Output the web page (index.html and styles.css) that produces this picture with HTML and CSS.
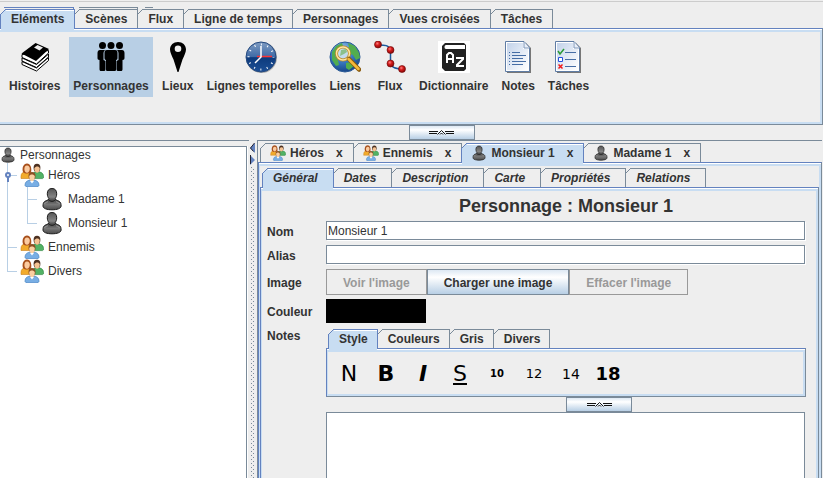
FILE: index.html
```html
<!DOCTYPE html>
<html lang="fr">
  <head>
    <meta charset="utf-8">
    <title>Personnages</title>
    <link rel="stylesheet" href="styles.css">
  </head>
  <body>
    <svg class="defs" aria-hidden="true">
      <defs>
        <linearGradient id="dark" x1="0" y1="0" x2="0" y2="1">
          <stop offset="0" stop-color="#555" />
          <stop offset=".4" stop-color="#858585" />
          <stop offset=".55" stop-color="#4a4a4a" />
          <stop offset=".75" stop-color="#777" />
          <stop offset="1" stop-color="#4c4c4c" />
        </linearGradient>
        <linearGradient id="clockface" x1="0" y1="0" x2="0" y2="1">
          <stop offset="0" stop-color="#7f9cc2" />
          <stop offset=".5" stop-color="#3f6aa6" />
          <stop offset=".52" stop-color="#0d3a7c" />
          <stop offset="1" stop-color="#1c4f96" />
        </linearGradient>
        <radialGradient id="globe" cx=".4" cy=".25" r=".8">
          <stop offset="0" stop-color="#9cc6ee" />
          <stop offset=".5" stop-color="#3b7cc4" />
          <stop offset="1" stop-color="#123f80" />
        </radialGradient>
        <radialGradient id="ball" cx=".4" cy=".35" r=".7">
          <stop offset="0" stop-color="#ff8080" />
          <stop offset=".4" stop-color="#d41c1c" />
          <stop offset="1" stop-color="#7c0505" />
        </radialGradient>
        <linearGradient id="paper" x1="0" y1="0" x2="1" y2="1">
          <stop offset="0" stop-color="#c3d3ea" />
          <stop offset="1" stop-color="#fff" />
        </linearGradient>
      </defs>
      <symbol id="person" viewBox="0 0 24 24">
        <path d="M12 1.500c3.200 0 4.700 2 4.700 5.300 0 2-.6 3.700-1.700 5 1.500 1.800 3 1.700 4.500 2.700 1.300.9 1.600 2.500 1.600 4.500 0 2.500-4 3.800-9.100 3.800S3 21.500 3 19c0-2 .3-3.600 1.600-4.500 1.500-1 3-.9 4.500-2.700-1.100-1.300-1.800-3-1.800-5C7.300 3.500 8.800 1.500 12 1.500z" fill="url(#dark)" stroke="#1c1c1c" />
        <path d="M8.500 12.500c2 2.500 5 2.500 7 0" fill="none" stroke="#1c1c1c" />
        <path d="M4.500 17c.4-1.500 2-1.700 3.500-2.300M19.500 17c-.4-1.500-2-1.700-3.500-2.300" fill="none" stroke="#aaa" stroke-width=".7" />
      </symbol>
      <symbol id="group" viewBox="0 0 24 24">
        <path d="M1 13.500c0-3.300 2-4.700 5.500-4.700s6 1.400 6 4.700l-.5 2H1z" fill="#f2ab2c" stroke="#c9801a" stroke-width=".6" />
        <path d="M3 9C1.600 5 3.500.5 7 .5S12 5 11 9.500C8 11 5 11 3 9z" fill="#a8501c" />
        <path d="M7 2.500c1.800 0 2.800 1.300 2.800 3.300S8.500 9.800 7 9.800 4.400 8 4.400 6 5.200 2.500 7 2.500z" fill="#fbcba0" />
        <path d="M12 13.500c0-3.300 2-4.700 5.500-4.700s6 1.400 6 4.700v1.300l-1 .8H12z" fill="#52b265" stroke="#238038" stroke-width=".6" />
        <ellipse cx="17" cy="5" rx="3.400" ry="4.200" fill="#4c3020" />
        <path d="M14.300 5.200c1-1.200 2-1.800 3-1.700 1.200 0 2 .7 2.500 1.700 0 2.500-1 4.500-2.700 4.500s-2.800-2-2.800-4.500z" fill="#f5c393" />
        <path d="M5 22.500c0-4 2.500-5.500 7-5.500s7 1.500 7 5.500l-1 1.200H6z" fill="#78aee4" stroke="#3b79bb" stroke-width=".6" />
        <ellipse cx="12" cy="13" rx="3.500" ry="4" fill="#8a5024" />
        <path d="M9.200 13c1-1.200 1.600-1.600 2.800-1.600s2.200.6 2.800 1.600c0 3-1 5.500-2.800 5.500S9.200 16 9.200 13z" fill="#fbd0a2" />
        <path d="M10 18l2 2.500 2-2.500" fill="#fff" />
      </symbol>
      <symbol id="grip" viewBox="0 0 25 5">
        <path d="M0 1.500h9M0 3.500h8M16 1.500h9M17 3.500h8" fill="none" stroke="#111" />
        <path d="M8.500 4.500l4-4 4 4M11 4.500l1.500-1.500 1.500 1.500" fill="none" stroke="#111" />
      </symbol>
    </svg>

    <div class="app">
      <header class="ribbon">
        <div class="stack"><span class="on"></span><span></span><span class="short"></span></div>
        <div class="tabs" role="tablist">
          <button class="tab selected" role="tab">Eléments</button>
          <button class="tab" role="tab">Scènes</button>
          <button class="tab" role="tab">Flux</button>
          <button class="tab" role="tab">Ligne de temps</button>
          <button class="tab" role="tab">Personnages</button>
          <button class="tab" role="tab">Vues croisées</button>
          <button class="tab" role="tab">Tâches</button>
        </div>
        <div class="panel tools">
          <button class="tool">
            <svg width="32" height="32" viewBox="0 0 32 32">
              <path d="M3 13.500v3L17.500 23 29.500 12V9.500z" fill="#fff" stroke="#000" />
              <path d="M3 17l0 3L17.500 26.500 29.500 16v-3L17.500 23.500z" fill="#fff" stroke="#000" />
              <path d="M3 20.500v3L17.500 30 29.500 19.500v-3L17.500 27z" fill="#fff" stroke="#000" />
              <path d="M2.500 12.500L16.500 2l13.500 6-13 12z" />
              <path d="M15 6.500l3.500-2.500 5.500 2.500-3.500 3z" fill="#eee" />
            </svg>
            Histoires
          </button>
          <button class="tool active">
            <svg width="32" height="32" viewBox="0 0 32 32">
              <circle cx="7.500" cy="4.500" r="3.500" /><circle cx="16" cy="4.500" r="3.500" /><circle cx="24.500" cy="4.500" r="3.500" />
              <path d="M5 9h5c-1 1-1.500 2-1.500 3v7l2 1v8c0 2-1 2-2 2H6c-1 0-1.500-.5-1.500-2v-9C3 19 2.500 18 2.500 17v-5c0-2 1-3 2.500-3zM27 9h-5c1 1 1.500 2 1.500 3v7l-2 1v8c0 2 1 2 2 2H26c1 0 1.500-.5 1.500-2v-9c1.500 0 2-1 2-2v-5c0-2-1-3-2.500-3z" />
              <path d="M12 9h8c2 0 2.500 1 2.500 3v5c0 1-.5 2-1.500 2v9.500c0 1-.5 1.500-1.500 1.500h-7c-1 0-1.500-.5-1.500-1.500V19c-1 0-1.500-1-1.500-2v-5c0-2 .5-3 2.500-3z" />
            </svg>
            Personnages
          </button>
          <button class="tool">
            <svg width="32" height="32" viewBox="0 0 32 32">
              <path fill-rule="evenodd" d="M16 1c4.500 0 8 3 8 7.500 0 3-2 6.500-3.500 10L16.500 31h-1l-4-12.500C10 15 8 11.500 8 8.500 8 4 11.500 1 16 1zm0 3.500a3.300 3.300 0 1 0 0 6.600 3.300 3.300 0 0 0 0-6.600z" />
            </svg>
            Lieux
          </button>
          <button class="tool">
            <svg width="32" height="32" viewBox="0 0 32 32">
              <circle cx="16.500" cy="16.500" r="15.500" fill="#aaa" />
              <circle cx="16" cy="16" r="15" fill="url(#clockface)" stroke="#254a80" />
              <circle cx="16" cy="16" r="12.500" fill="none" stroke="#fff" stroke-width="2" stroke-dasharray="1 5.545" stroke-dashoffset=".5" />
              <path d="M12 15.500h15" stroke="#f33" stroke-width="1.500" />
              <path d="M16 5v11l-6 6" fill="none" stroke="#fff" stroke-width="1.500" />
            </svg>
            Lignes temporelles
          </button>
          <button class="tool">
            <svg width="32" height="32" viewBox="0 0 32 32">
              <circle cx="16" cy="16" r="15" fill="url(#globe)" stroke="#2a5a96" />
              <path d="M3 11l4-6 6-3 1 3-3 3-2 4-3 3 3 4 1 5-3 1-4-6zM19 2l7 3 4 7 1 5-4 2-3-5-5-2-2-4 3-2zM17 22l5-1 3 4-5 4-3-2z" fill="#52ad4e" />
              <circle cx="14" cy="12.500" r="6.500" fill="#d3e6f2" fill-opacity=".85" stroke="#b98726" stroke-width="3" />
              <circle cx="14" cy="12.500" r="6.500" fill="none" stroke="#ffe5a0" stroke-width="1.500" />
              <path d="M11 15l1-6 5-1 1 3-3 2z" fill="#8bc08b" />
              <path d="M20 18l10 10.500" stroke="#8a5b0e" stroke-width="4.500" stroke-linecap="round" />
              <path d="M19.500 18l10 10" stroke="#f6b93b" stroke-width="2.500" stroke-linecap="round" />
            </svg>
            Liens
          </button>
          <button class="tool">
            <svg width="32" height="32" viewBox="0 0 32 32">
              <path d="M4 4c7 0 11 0 12.500 5v12c0 5 4 7 12 7" fill="none" stroke="#1d5a9c" stroke-width="1.500" />
              <g fill="url(#ball)" stroke="#6f0505" stroke-width=".6">
                <circle cx="4" cy="3.500" r="3.500" /><circle cx="16.500" cy="9" r="3.500" /><circle cx="16.500" cy="22.500" r="3.500" /><circle cx="28" cy="28" r="3.500" />
              </g>
            </svg>
            Flux
          </button>
          <button class="tool">
            <svg width="32" height="32" viewBox="0 0 32 32">
              <path fill="#fff" d="M0 0h32v32H0z" />
              <path fill="#222" d="M7 2h19l2 2v24l-2 2H7l-3-3V5z" />
              <path d="M8 4h19v4H8c-2 0-2-4 0-4z" fill="#fff" />
              <path d="M9 22v-8l2-2h2l2 2v8M9 18h6M18 17h7v1l-6 6v1h7" fill="none" stroke="#fff" stroke-width="2" />
            </svg>
            Dictionnaire
          </button>
          <button class="tool">
            <svg width="32" height="32" viewBox="0 0 32 32">
              <path d="M5 2h19l5 5v25H5z" fill="#777" />
              <path d="M3.500.5H22l5.500 6v24h-24z" fill="#fff" stroke="#5f7ca4" />
              <path d="M5 2h16v6h5v21H5z" fill="url(#paper)" />
              <path d="M22 1v6h5.500" fill="#e9eff8" stroke="#7e97b9" />
              <path d="M10 11.500h8M10 14.500h14M10 17.500h11M10 20.500h14M10 23.500h11M7 11.500h1M7 14.500h1M7 17.500h1M7 20.500h1M7 23.500h1" stroke="#456da5" />
            </svg>
            Notes
          </button>
          <button class="tool">
            <svg width="32" height="32" viewBox="0 0 32 32">
              <path d="M5 2h19l5 5v25H5z" fill="#777" />
              <path d="M3.500.5H22l5.500 6v24h-24z" fill="#fff" stroke="#5f7ca4" />
              <path d="M5 2h16v6h5v21H5z" fill="url(#paper)" />
              <path d="M22 1v6h5.500" fill="#e9eff8" stroke="#7e97b9" />
              <path d="M13 11.500h11M13 18.500h11M13 25.500h11" stroke="#456da5" />
              <path d="M6 10l2 3 4-5" fill="none" stroke="#2a9a35" stroke-width="1.500" />
              <path d="M6.500 16.500h4v4h-4z" fill="#fff" stroke="#2250dd" />
              <path d="M6.500 23.500l4 4m0-4l-4 4" stroke="#f01818" stroke-width="1.500" />
            </svg>
            Tâches
          </button>
        </div>
      </header>
      <button class="fold" aria-label="Replier la barre"><svg width="25" height="5"><use href="#grip" /></svg></button>

      <main class="split">
        <aside class="side">
          <div class="tree">
            <div class="node root"><svg width="16" height="16"><use href="#person" /></svg>Personnages</div>
            <ul>
              <li>
                <svg class="handle" width="6" height="10" viewBox="0 0 6 10"><circle cx="3" cy="3" r="2" fill="#fff" stroke="#6382bf" stroke-width="2" /><path d="M3 5v5" stroke="#6382bf" stroke-width="2" /></svg>
                <div class="node"><svg width="24" height="24"><use href="#group" /></svg>Héros</div>
                <ul>
                  <li><div class="node"><svg width="24" height="24"><use href="#person" /></svg>Madame 1</div></li>
                  <li><div class="node"><svg width="24" height="24"><use href="#person" /></svg>Monsieur 1</div></li>
                </ul>
              </li>
              <li><div class="node"><svg width="24" height="24"><use href="#group" /></svg>Ennemis</div></li>
              <li><div class="node"><svg width="24" height="24"><use href="#group" /></svg>Divers</div></li>
            </ul>
          </div>
        </aside>

        <div class="divider">
          <svg width="5" height="22" viewBox="0 0 5 22">
            <path d="M5 0v10L0 5z" fill="#6382bf" /><path d="M4.500 0L.5 5l3 3.500" fill="none" stroke="#223" />
            <path d="M0 12v10l5-5z" fill="#6382bf" /><path d="M.5 12v9" stroke="#223" />
          </svg>
        </div>

        <section class="work">
          <div class="tabs docs" role="tablist">
            <button class="tab" role="tab"><svg width="16" height="16"><use href="#group" /></svg>Héros<span class="close">x</span></button>
            <button class="tab" role="tab"><svg width="16" height="16"><use href="#group" /></svg>Ennemis<span class="close">x</span></button>
            <button class="tab selected" role="tab"><svg width="16" height="16"><use href="#person" /></svg>Monsieur 1<span class="close">x</span></button>
            <button class="tab" role="tab"><svg width="16" height="16"><use href="#person" /></svg>Madame 1<span class="close">x</span></button>
          </div>
          <div class="panel outer">
            <div class="tabs pages" role="tablist">
              <button class="tab selected" role="tab">Général</button>
              <button class="tab" role="tab">Dates</button>
              <button class="tab" role="tab">Description</button>
              <button class="tab" role="tab">Carte</button>
              <button class="tab" role="tab">Propriétés</button>
              <button class="tab" role="tab">Relations</button>
            </div>
            <div class="panel inner">
              <form class="form">
                <h1>Personnage : Monsieur 1</h1>
                <label for="nom">Nom</label>
                <input id="nom" type="text" value="Monsieur 1">
                <label for="alias">Alias</label>
                <input id="alias" type="text">
                <span class="label">Image</span>
                <div class="buttons">
                  <button type="button" disabled>Voir l'image</button>
                  <button type="button">Charger une image</button>
                  <button type="button" disabled>Effacer l'image</button>
                </div>
                <span class="label">Couleur</span>
                <button type="button" class="swatch" aria-label="Couleur"></button>
                <label class="top" for="notes">Notes</label>
                <div class="editor">
                  <div class="tabs" role="tablist">
                    <button type="button" class="tab selected" role="tab">Style</button>
                    <button type="button" class="tab" role="tab">Couleurs</button>
                    <button type="button" class="tab" role="tab">Gris</button>
                    <button type="button" class="tab" role="tab">Divers</button>
                  </div>
                  <div class="panel styles">
                    <button type="button">N</button>
                    <button type="button" class="bold">B</button>
                    <button type="button" class="bold italic">I</button>
                    <button type="button" class="underline">S</button>
                    <button type="button" class="bold s10">10</button>
                    <button type="button" class="s12">12</button>
                    <button type="button" class="s14">14</button>
                    <button type="button" class="bold s18">18</button>
                  </div>
                  <button type="button" class="fold" aria-label="Replier les styles"><svg width="25" height="5"><use href="#grip" /></svg></button>
                  <textarea id="notes"></textarea>
                </div>
              </form>
            </div>
          </div>
        </section>
      </main>
    </div>
  </body>
</html>
```
FILE: styles.css
```css
* {
  box-sizing: border-box;
}

body {
  --line: #7a8a99;
  --blue: #6382bf;
  --light: #c8ddf2;
  --bg: #eee;
  margin: 0;
  background: var(--bg);
  color: #333;
  font: 12px/16px "Liberation Sans", Arial, sans-serif;
}

button {
  margin: 0;
  padding: 0;
  border: 0;
  background: none;
  color: inherit;
  font: inherit;
  font-weight: bold;
  white-space: nowrap;
}

svg {
  display: block;
  flex: none;
}

.defs {
  position: absolute;
  width: 0;
  height: 0;
}

.app {
  display: flex;
  flex-direction: column;
  height: 100vh;
  overflow: hidden;
}

/* tabs */

.tabs {
  display: flex;
  height: 19px;
}

.tab {
  --edge: var(--line);
  --fill: var(--bg);
  position: relative;
  display: flex;
  align-items: center;
  height: 19px;
  margin-right: -1px;
  padding: 1px 11px 0;
  background:
    linear-gradient(to bottom right, transparent 43%, var(--edge) 43%, var(--edge) 57%, var(--fill) 57%) 0 0 / 6px 6px no-repeat,
    linear-gradient(var(--edge), var(--edge)) 6px 0 / 100% 1px no-repeat,
    linear-gradient(var(--edge), var(--edge)) 0 6px / 1px 100% no-repeat,
    linear-gradient(var(--edge), var(--edge)) 100% 0 / 1px 100% no-repeat,
    linear-gradient(var(--fill), var(--fill)) 6px 0 / 100% 100% no-repeat,
    linear-gradient(var(--fill), var(--fill)) 0 6px / 100% 100% no-repeat;
}

.tab.selected {
  --edge: var(--blue);
  --fill: var(--light);
  z-index: 1;
}

.tab.selected::before {
  content: "";
  position: absolute;
  top: 1px;
  left: 6px;
  right: 1px;
  height: 1px;
  background: #fff;
}

.tab.selected::after {
  content: "";
  position: absolute;
  left: 1px;
  right: 1px;
  bottom: -2px;
  height: 2px;
  background: var(--light);
}

.panel {
  border: 1px solid var(--line);
  border-top-color: var(--blue);
  border-left-color: var(--blue);
  box-shadow: inset 0 1px #fff, inset 0 3px var(--light), inset 1px 0 var(--light), inset -2px -2px var(--light);
}

/* top ribbon */

.ribbon {
  padding-top: 7px;
  background: linear-gradient(#ccc, #ccc) 0 1px / 100% 1px no-repeat;
}

.stack {
  display: flex;
  gap: 5px;
  height: 2px;
  padding-left: 4px;
}

.stack span {
  width: 59px;
  border: solid var(--line);
  border-width: 1px 1px 0 0;
}

.stack .on {
  width: 70px;
  border-color: var(--blue);
}

.stack .short {
  width: 8px;
  margin-left: 2px;
  border-right: 0;
}

.tools {
  display: flex;
  align-items: flex-start;
  gap: 5px;
  height: 97px;
  padding: 8px 5px 0;
  border-left: 0;
  box-shadow: inset 0 1px #fff, inset 0 3px var(--light), inset -2px -2px var(--light);
}

.tool {
  display: flex;
  flex-direction: column;
  align-items: center;
  gap: 5px;
  padding: 4px 4px 3px;
}

.active {
  background: #b8cfe5;
}

.fold {
  display: flex;
  flex: none;
  align-items: center;
  justify-content: center;
  width: 66px;
  height: 15px;
  margin-left: calc(50% - 3px);
  border: 1px solid var(--line);
  background: linear-gradient(#dde8f3, #fff 30%, #b8cfe5);
}

/* split area */

.split {
  display: flex;
  flex: 1;
  min-height: 0;
}

.side {
  display: flex;
  flex: none;
  width: 249px;
  padding-top: 5px;
  padding-right: 2px;
  border-top: 1px solid var(--line);
}

.tree {
  flex: 1;
  border: solid var(--line);
  border-width: 1px 1px 0 0;
  background: #fff;
  box-shadow: 1px 0 #fff;
}

.tree ul {
  margin: 0;
  padding: 0;
  list-style: none;
}

.tree > ul {
  padding-left: 7px;
}

.tree li {
  position: relative;
  padding-left: 13px;
}

.tree li ul {
  padding-left: 7px;
}

.tree li::before {
  content: "";
  position: absolute;
  top: 0;
  bottom: 0;
  left: 0;
  border-left: 1px solid #b8cfe5;
}

.tree li:last-child::before {
  bottom: 12px;
}

.tree li::after {
  content: "";
  position: absolute;
  top: 12px;
  left: 0;
  width: 10px;
  border-top: 1px solid #b8cfe5;
}

.node {
  display: flex;
  align-items: center;
  gap: 4px;
  height: 24px;
  line-height: 18px;
}

.root {
  height: 16px;
}

.handle {
  position: absolute;
  z-index: 1;
  top: 9px;
  left: -2px;
}

.divider {
  display: flex;
  flex: none;
  flex-direction: column;
  width: 8px;
  padding: 3px 0 0 1px;
}

.divider::after {
  content: "";
  flex: 1;
  width: 4px;
  margin: 2px 0 0 1px;
  background:
    conic-gradient(from 270deg at 1px 1px, var(--line) 90deg, transparent 0) 0 0 / 4px 4px,
    conic-gradient(from 270deg at 1px 1px, var(--line) 90deg, transparent 0) 2px 2px / 4px 4px;
}

.work {
  display: flex;
  flex: 1;
  flex-direction: column;
  min-width: 0;
  margin-right: 1px;
  padding-top: 2px;
  border: solid var(--line);
  border-width: 1px 0 0 1px;
}

.docs,
.pages {
  flex: none;
  margin-left: 2px;
}

.docs .tab {
  gap: 4px;
  padding-left: 10px;
}

.close {
  margin-left: 8px;
}

.outer,
.inner {
  display: flex;
  flex: 1;
  flex-direction: column;
  min-height: 0;
  border-bottom: 0;
  box-shadow: inset 0 1px #fff, inset 0 3px var(--light), inset 1px 0 var(--light), inset -2px 0 var(--light);
}

.outer {
  padding: 5px 2px 0 1px;
}

.pages {
  margin-left: 2px;
}

.pages .tab {
  padding: 1px 16px 0 11px;
  font-style: italic;
}

.inner {
  padding: 7px 12px 0 6px;
}

.form {
  display: grid;
  flex: 1;
  grid-template-columns: 55px 1fr;
  grid-template-rows: 22px 20px 20px 26px 24px 1fr;
  gap: 4px;
  min-height: 0;
}

h1 {
  grid-column: 2;
  margin: 0;
  font-size: 18px;
  line-height: 22px;
  text-align: center;
}

.form label,
.label {
  align-self: center;
  padding-top: 2px;
  font-weight: bold;
}

.form .top {
  align-self: start;
  padding-top: 1px;
}

.form input {
  width: calc(100% - 1px);
  height: 19px;
  padding: 1px 1px 0;
  border: 1px solid var(--line);
  background: #fff;
  box-shadow: 1px 1px #fff;
  color: inherit;
  font: inherit;
}

.buttons {
  display: flex;
}

.buttons button {
  padding: 2px 16px 0;
  border: 1px solid var(--line);
  background: linear-gradient(#dde8f3, #fff 30%, #b8cfe5);
}

.buttons button:disabled {
  border-color: #999;
  background: none;
  color: #999;
}

.form .swatch {
  width: 100px;
  background: #000;
}

.editor {
  display: flex;
  flex-direction: column;
  min-height: 0;
  padding-top: 2px;
}

.editor .tabs {
  flex: none;
  margin-left: 2px;
}

.editor .tab {
  padding-right: 10px;
}

.styles {
  display: flex;
  flex: none;
  gap: 5px;
  padding: 9px 6px 6px;
}

.styles button {
  width: 32px;
  height: 32px;
  color: #000;
  font: 22px/32px "DejaVu Sans", sans-serif;
}

.styles .bold {
  font-weight: bold;
}

.styles .italic {
  font-style: italic;
}

.styles .underline {
  text-decoration: underline;
}

.styles .s10 {
  font-size: 10px;
}

.styles .s12 {
  font-size: 13px;
}

.styles .s14 {
  font-size: 14px;
}

.styles .s18 {
  font-size: 18px;
}

.editor .fold {
  margin-left: 50%;
}

textarea {
  flex: 1;
  width: calc(100% - 1px);
  min-height: 0;
  border: solid var(--line);
  border-width: 1px 1px 0;
  outline: 0;
  background: #fff;
  resize: none;
}
```
